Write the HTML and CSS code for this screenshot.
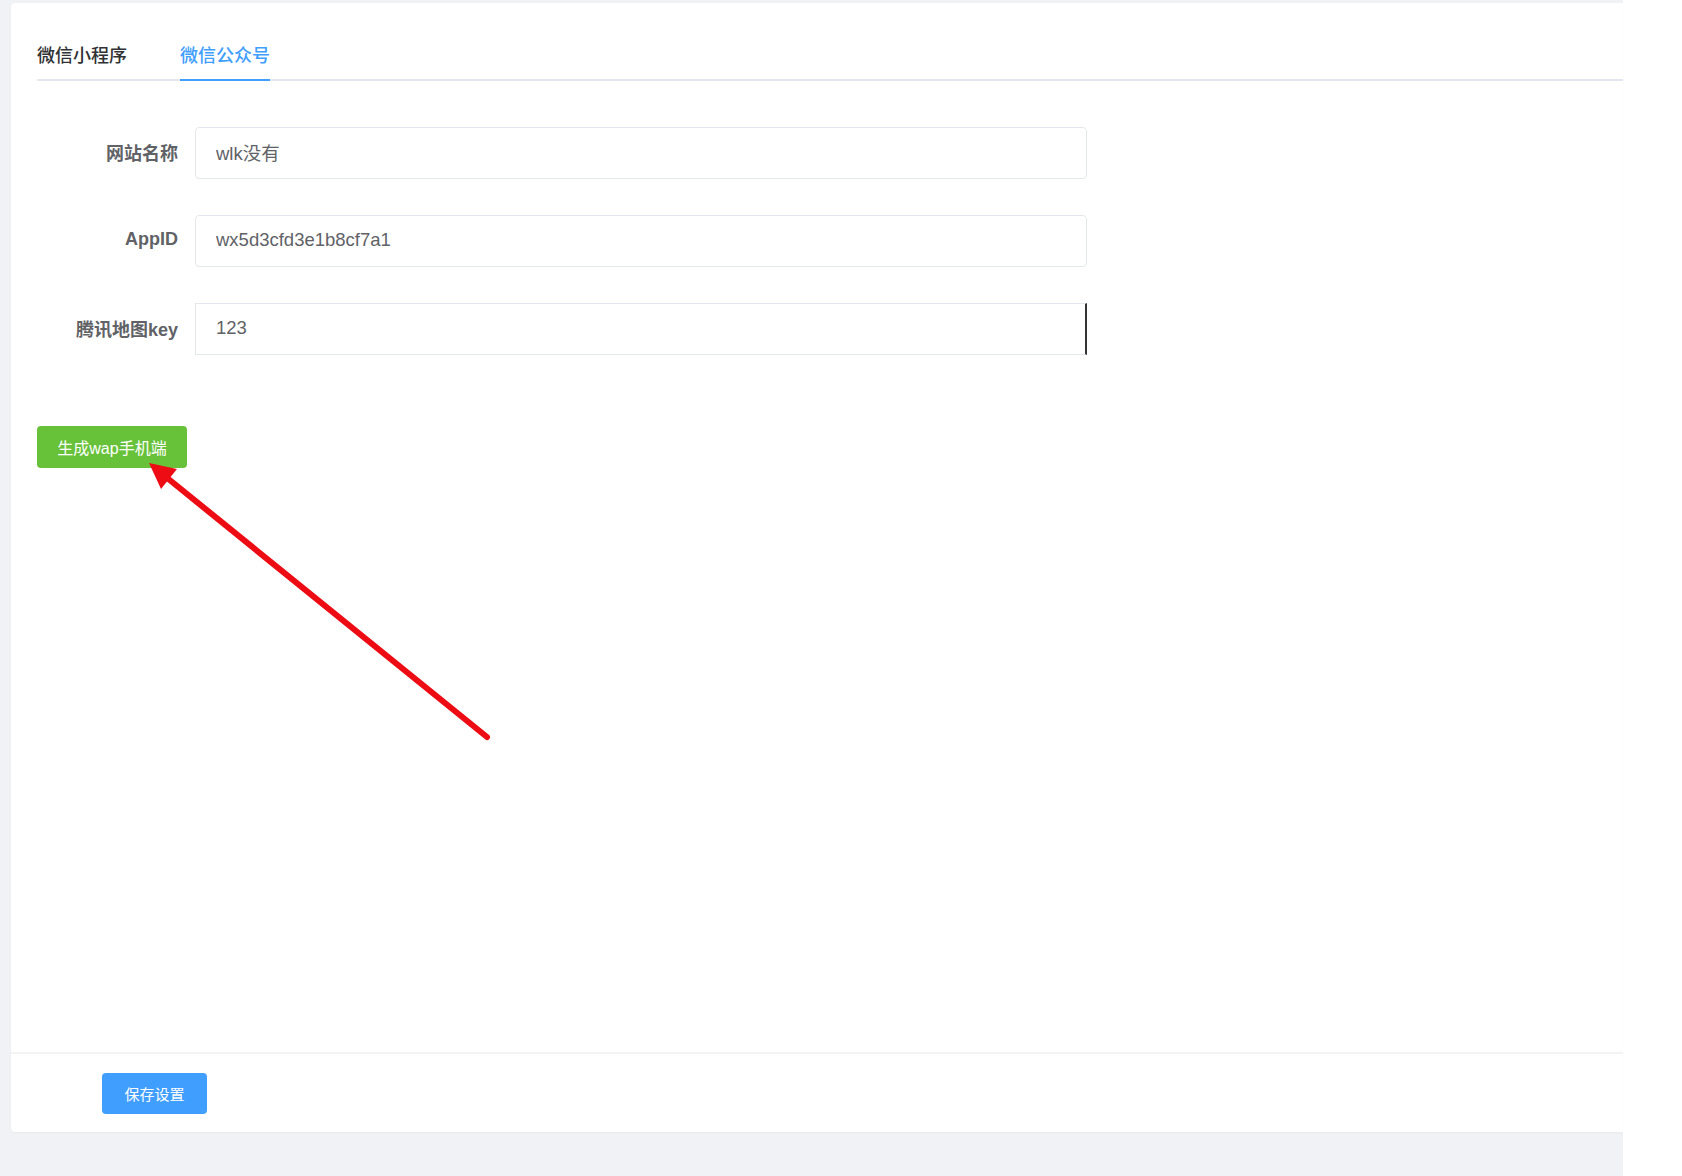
FILE: index.html
```html
<!DOCTYPE html>
<html>
  <head>
    <title>设置</title>
    <link rel="stylesheet" href="styles.css">
  </head>
  <body>
    <div class="page">
      <div class="card">
        <div class="card-main">
          <div class="tabs">
            <div class="tab">微信小程序</div>
            <div class="tab active">微信公众号</div>
          </div>

          <div class="form">
            <div class="form-row">
              <label class="form-label">网站名称</label>
              <input class="form-input" type="text" value="wlk没有" />
            </div>
            <div class="form-row">
              <label class="form-label">AppID</label>
              <input class="form-input" type="text" value="wx5d3cfd3e1b8cf7a1" />
            </div>
            <div class="form-row">
              <label class="form-label">腾讯地图key</label>
              <input class="form-input is-focus" type="text" value="123" />
            </div>
          </div>

          <button class="btn btn-green">生成wap手机端</button>
        </div>

        <div class="card-footer">
          <button class="btn btn-blue">保存设置</button>
        </div>
      </div>
    </div>

    <!-- annotation arrow drawn over the page -->
    <svg class="arrow" width="1682" height="1176" viewBox="0 0 1682 1176">
      <line x1="487" y1="737" x2="166" y2="477" stroke="#ee0c14" stroke-width="6" stroke-linecap="round" />
      <polygon points="149,463 161,489 177,469" fill="#ee0c14" />
    </svg>
  </body>
</html>
```

FILE: styles.css
```css
body {
  margin: 0;
  background-color: #fff;
  font-family: "Liberation Sans", "Noto Sans CJK SC", sans-serif;
}
.page {
  width: 1612px;
  padding: 3px 0 44px 11px;
  background-color: #f0f2f5;
}
.card {
  height: 1129px;
  background-color: #fff;
  border-radius: 4px 0 0 4px;
  box-shadow: 0 1px 2px rgba(0, 0, 0, 0.04);
  display: flex;
  flex-direction: column;
}
.card-main {
  flex: 1;
  padding: 32px 0 0 26px;
}
.tabs {
  display: flex;
  border-bottom: 2px solid #e4e7ed;
}
.tab {
  height: 44px;
  line-height: 42px;
  font-size: 18px;
  font-weight: 500;
  color: #303133;
  margin-right: 53px;
  margin-bottom: -2px;
  border-bottom: 2px solid transparent;
}
.tab.active {
  color: #409eff;
  border-bottom-color: #409eff;
}
.form {
  margin-top: 46px;
  width: 1050px;
}
.form-row {
  display: flex;
  align-items: center;
  margin-bottom: 36px;
}
.form-label {
  width: 158px;
  flex-shrink: 0;
  box-sizing: border-box;
  padding-right: 17px;
  padding-bottom: 3px;
  text-align: right;
  font-size: 18px;
  font-weight: bold;
  color: #606266;
}
.form-input {
  flex: 1;
  height: 52px;
  box-sizing: border-box;
  padding: 0 20px 2px;
  border: 1px solid #e4e7ed;
  border-radius: 4px;
  font-family: "Liberation Sans", "Noto Sans CJK SC", sans-serif;
  font-size: 18.5px;
  color: #606266;
  outline: none;
}
.form-input.is-focus {
  border-radius: 0;
  border-right: 2px solid #333;
}
.btn {
  border: none;
  border-radius: 4px;
  color: #fff;
  cursor: pointer;
  font-family: "Liberation Sans", "Noto Sans CJK SC", sans-serif;
}
.btn-green {
  margin-top: 35px;
  width: 150px;
  height: 42px;
  font-size: 16px;
  background-color: #67c23a;
}
.btn-blue {
  width: 105px;
  height: 41px;
  font-size: 15px;
  background-color: #409eff;
}
.card-footer {
  border-top: 2px solid #f2f3f5;
  padding: 19px 0 18px 91px;
}
.arrow {
  position: absolute;
  left: 0;
  top: 0;
  pointer-events: none;
}
```
